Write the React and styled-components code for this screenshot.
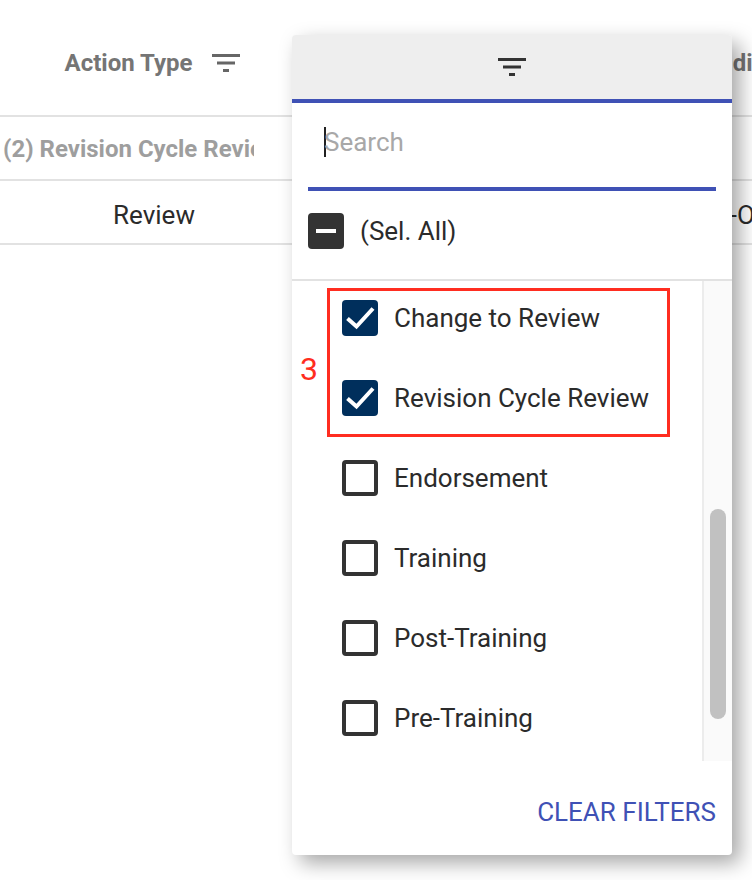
import React from 'react'
import styled, { createGlobalStyle } from 'styled-components'

const actionTypes = [
    { label: 'Change to Review', checked: true },
    { label: 'Revision Cycle Review', checked: true },
    { label: 'Endorsement' },
    { label: 'Training' },
    { label: 'Post-Training' },
    { label: 'Pre-Training' },
]

const FilterIcon = ({ color }) => (
    <svg width="28" height="18" viewBox="0 0 28 18" fill={color}>
        <rect x="0" y="0" width="28" height="3" />
        <rect x="5" y="7.5" width="18" height="3" />
        <rect x="11" y="15" width="6" height="3" />
    </svg>
)

const CheckIcon = () => (
    <svg width="36" height="36" viewBox="0 0 36 36" fill="none">
        <path d="M5.5 18.5 L14.5 26.5 L31 8.5" stroke="#fff" strokeWidth="4" />
    </svg>
)

const App = () => (
    <Page>
        <GlobalStyle />
        <Table>
            <HeaderRow>
                <HeaderCell>
                    <span>Action Type</span>
                    <FilterIcon color="#666" />
                </HeaderCell>
                <SideText $bold>Pending</SideText>
            </HeaderRow>
            <FilterRow>
                <FilterValue>(2) Revision Cycle Review</FilterValue>
            </FilterRow>
            <DataRow>
                <DataCell>Review</DataCell>
                <SideText>Pre-Op</SideText>
            </DataRow>
        </Table>

        <Menu>
            <MenuTabs>
                <FilterIcon color="#333" />
            </MenuTabs>
            <SearchField>
                <Caret />
                <SearchInput placeholder="Search" readOnly />
            </SearchField>
            <SelectAll>
                <IndeterminateBox />
                <span>(Sel. All)</span>
            </SelectAll>
            <ListArea>
                <OptionList>
                    {actionTypes.map((item) => (
                        <Option key={item.label}>
                            <CheckBox $checked={item.checked}>
                                {item.checked && <CheckIcon />}
                            </CheckBox>
                            <span>{item.label}</span>
                        </Option>
                    ))}
                    <Marker />
                    <MarkerNumber>3</MarkerNumber>
                </OptionList>
                <ScrollTrack>
                    <ScrollThumb />
                </ScrollTrack>
            </ListArea>
            <MenuFooter>
                <ClearButton>CLEAR FILTERS</ClearButton>
            </MenuFooter>
        </Menu>
    </Page>
)

export default App

const GlobalStyle = createGlobalStyle`
    html, body {
        margin: 0;
        padding: 0;
        background: #fff;
    }
    * {
        box-sizing: border-box;
    }
`

const Page = styled.div`
    position: relative;
    width: 752px;
    height: 880px;
    overflow: hidden;
    font-family: Roboto, "Liberation Sans", sans-serif;
    font-size: 26px;
    color: #2b2b2b;
`

const Table = styled.div`
    display: flex;
    flex-direction: column;
    width: 752px;
`

const HeaderRow = styled.div`
    display: flex;
    align-items: center;
    height: 117px;
    padding-top: 11px;
    border-bottom: 2px solid #e2e2e2;
    font-weight: 700;
    font-size: 24px;
    color: #757575;
`

const HeaderCell = styled.div`
    flex: none;
    display: flex;
    align-items: center;
    justify-content: center;
    gap: 20px;
    width: 305px;
    margin-right: 3px;
`

const SideText = styled.div`
    flex: none;
    margin-left: 383px;
    white-space: nowrap;
    font-weight: ${(p) => (p.$bold ? 700 : 400)};
`

const FilterRow = styled.div`
    height: 64px;
    padding: 2px 0 0 3px;
    display: flex;
    align-items: center;
    border-bottom: 2px solid #e2e2e2;
`

const FilterValue = styled.div`
    width: 251px;
    overflow: hidden;
    white-space: nowrap;
    font-size: 24px;
    font-weight: 700;
    color: #9e9e9e;
`

const DataRow = styled.div`
    height: 64px;
    padding-top: 6px;
    display: flex;
    align-items: center;
    border-bottom: 2px solid #e2e2e2;
`

const DataCell = styled.div`
    flex: none;
    width: 308px;
    text-align: center;
`

const Menu = styled.div`
    position: absolute;
    left: 292px;
    top: 35px;
    width: 440px;
    height: 820px;
    display: flex;
    flex-direction: column;
    background: #fff;
    border-radius: 4px;
    box-shadow: 8px 8px 20px rgba(0, 0, 0, 0.35);
`

const MenuTabs = styled.div`
    flex: none;
    height: 68px;
    display: flex;
    align-items: center;
    justify-content: center;
    background: #eee;
    border-bottom: 4px solid #3f51b5;
    border-radius: 4px 4px 0 0;
`

const SearchField = styled.div`
    flex: none;
    height: 88px;
    margin: 0 16px;
    padding: 0 0 6px 16px;
    display: flex;
    align-items: center;
    border-bottom: 4px solid #3f51b5;
`

const Caret = styled.div`
    width: 2px;
    height: 30px;
    margin-right: -2px;
    background: #212121;
`

const SearchInput = styled.input`
    flex: 1;
    min-width: 0;
    padding: 0;
    border: none;
    outline: none;
    background: transparent;
    font: inherit;
    &::placeholder {
        color: #a8a8a8;
        opacity: 1;
    }
`

const SelectAll = styled.div`
    flex: none;
    height: 90px;
    padding: 0 0 8px 16px;
    display: flex;
    align-items: center;
    gap: 16px;
    border-bottom: 2px solid #e2e2e2;
`

const IndeterminateBox = styled.div`
    width: 36px;
    height: 36px;
    display: flex;
    align-items: center;
    justify-content: center;
    background: #333;
    border-radius: 4px;
    &::before {
        content: '';
        width: 20px;
        height: 4px;
        background: #fff;
    }
`

const ListArea = styled.div`
    flex: none;
    height: 480px;
    display: flex;
`

const OptionList = styled.div`
    position: relative;
    flex: 1;
    padding: 0 0 0 50px;
`

const Option = styled.div`
    height: 80px;
    display: flex;
    align-items: center;
    gap: 16px;
    &:first-child {
        margin-top: -3px;
    }
`

const CheckBox = styled.div`
    flex: none;
    width: 36px;
    height: 36px;
    border-radius: 4px;
    background: ${(p) => (p.$checked ? '#002f5c' : '#fff')};
    border: ${(p) => (p.$checked ? 'none' : '4px solid #333')};
`

const Marker = styled.div`
    position: absolute;
    left: 35px;
    top: 7px;
    width: 343px;
    height: 149px;
    border: 3px solid #ff2d20;
`

const MarkerNumber = styled.div`
    position: absolute;
    left: 8px;
    top: 69px;
    font-size: 32px;
    line-height: 38px;
    color: #ff2d20;
`

const ScrollTrack = styled.div`
    flex: none;
    width: 30px;
    height: 480px;
    padding: 228px 6px 0;
    background: #fafafa;
    border-left: 2px solid #ececec;
`

const ScrollThumb = styled.div`
    width: 16px;
    height: 210px;
    border-radius: 8px;
    background: #c1c1c1;
`

const MenuFooter = styled.div`
    flex: 1;
    padding: 8px 16px 0 0;
    display: flex;
    align-items: center;
    justify-content: flex-end;
`

const ClearButton = styled.div`
    color: #3f51b5;
`
